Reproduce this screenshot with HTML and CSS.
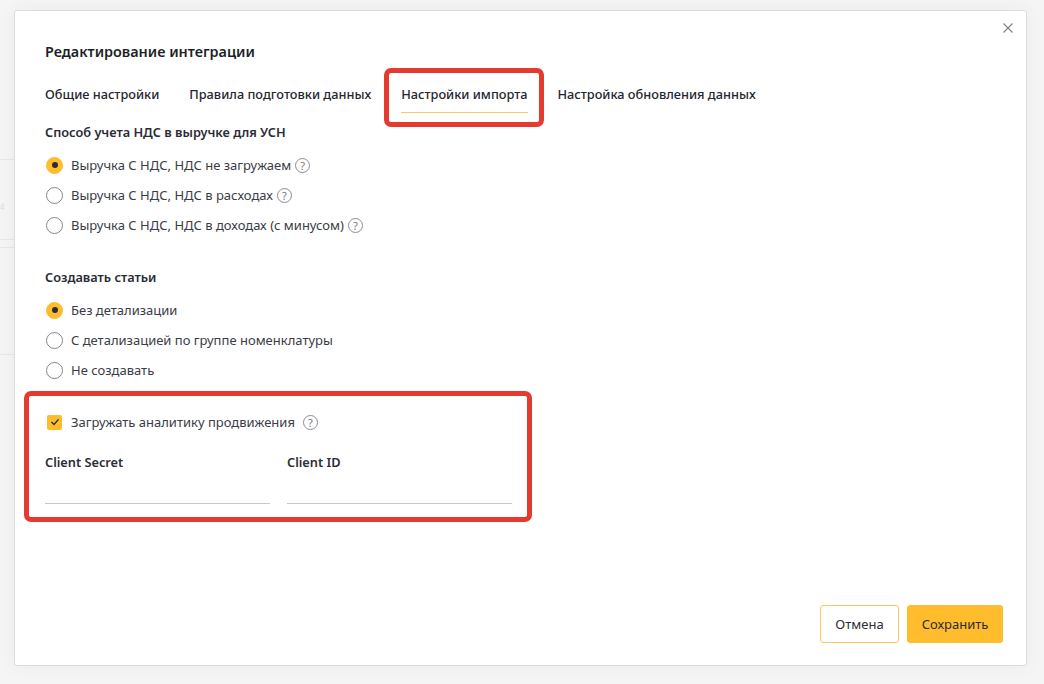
FILE: index.html
```html
<!DOCTYPE html>
<html lang="ru">
<head>
<meta charset="utf-8">
<title>Редактирование интеграции</title>
<link rel="stylesheet" href="styles.css">
</head>
<body>
<div class="backdrop">
  <span class="bg-line bg-line-1"></span>
  <span class="bg-line bg-line-2"></span>
  <span class="bg-line bg-line-3"></span>
  <span class="bg-line bg-line-4"></span>
  <span class="bg-digit">4</span>
</div>
<main class="modal">
  <svg class="close" width="12" height="12" viewBox="0 0 12 12"><path d="M1.5 1.5l9 9M10.5 1.5l-9 9" stroke="#85858f" stroke-width="1.2" fill="none"/></svg>
  <h1 class="title">Редактирование интеграции</h1>
  <nav class="tabs">
    <a class="tab">Общие настройки</a>
    <a class="tab">Правила подготовки данных</a>
    <a class="tab tab-active">Настройки импорта</a>
    <a class="tab">Настройка обновления данных</a>
  </nav>
  <section class="group group-vat">
    <h2 class="group-title">Способ учета НДС в выручке для УСН</h2>
    <div class="radio-list">
      <label class="option"><span class="radio radio-on"></span><span>Выручка С НДС, НДС не загружаем</span><span class="help">?</span></label>
      <label class="option"><span class="radio"></span><span>Выручка С НДС, НДС в расходах</span><span class="help">?</span></label>
      <label class="option"><span class="radio"></span><span>Выручка С НДС, НДС в доходах (с минусом)</span><span class="help">?</span></label>
    </div>
  </section>
  <section class="group group-items">
    <h2 class="group-title">Создавать статьи</h2>
    <div class="radio-list">
      <label class="option"><span class="radio radio-on"></span><span>Без детализации</span></label>
      <label class="option"><span class="radio"></span><span>С детализацией по группе номенклатуры</span></label>
      <label class="option"><span class="radio"></span><span>Не создавать</span></label>
    </div>
  </section>
  <section class="analytics">
    <label class="option option-check"><span class="check"><svg width="10" height="8" viewBox="0 0 10 8"><path d="M1.5 4l2.5 2.4 4.5-5" stroke="#2a2c36" stroke-width="1.4" fill="none"/></svg></span><span>Загружать аналитику продвижения</span><span class="help help-wide">?</span></label>
    <div class="fields">
      <div class="field"><span class="field-label">Client Secret</span><span class="field-input"></span></div>
      <div class="field"><span class="field-label">Client ID</span><span class="field-input"></span></div>
    </div>
  </section>
  <footer class="actions">
    <button class="btn btn-outline">Отмена</button>
    <button class="btn btn-primary">Сохранить</button>
  </footer>
</main>
<div class="mark mark-tab"></div>
<div class="mark mark-block"></div>
</body>
</html>
```
FILE: styles.css
```css
* { box-sizing: border-box; }
html, body { margin: 0; height: 100%; }
body {
  width: 1044px;
  height: 684px;
  overflow: hidden;
  background: #f5f5f5;
  font-family: "Noto Sans", "Liberation Sans", sans-serif;
  font-size: 13px;
  color: #2a2c36;
  position: relative;
}
.backdrop { position: absolute; inset: 0; }
.bg-line { position: absolute; left: 0; width: 14px; height: 1px; background: #e8e8e8; }
.bg-line-1 { top: 159px; }
.bg-line-2 { top: 239px; }
.bg-line-3 { top: 247px; }
.bg-line-4 { top: 354px; }
.bg-digit { position: absolute; left: 0; top: 202px; font-size: 8px; line-height: 10px; color: #dcdce0; }
.modal {
  position: absolute;
  left: 14px;
  top: 10px;
  width: 1013px;
  height: 656px;
  background: #fff;
  border: 1px solid #dcdcdc;
  border-radius: 3px;
  box-shadow: 0 0 20px rgba(0, 0, 0, 0.05);
  padding: 33px 30px 0;
  display: flex;
  flex-direction: column;
}
.close { position: absolute; right: 12px; top: 11px; }
.title { margin: 0; font-size: 14.4px; line-height: 16px; font-weight: 600; color: #1d1f27; }
.tabs { display: flex; gap: 30px; margin-top: 25px; }
.tab { display: block; font-size: 12.75px; line-height: 18px; font-weight: 500; padding-bottom: 9px; border-bottom: 1px solid transparent; color: #24262f; }
.tab-active { border-bottom-color: #fbc866; }
.group-vat { margin-top: 11px; }
.group-items { margin-top: 35px; }
.group-title { margin: 0; font-size: 12.75px; line-height: 16px; font-weight: 600; }
.radio-list { display: flex; flex-direction: column; gap: 12px; margin-top: 16px; }
.option { display: flex; align-items: center; height: 18px; font-size: 13px; color: #3a3c46; }
.radio {
  width: 17px; height: 17px; margin: 0 8px 0 1px;
  border: 1px solid #85858f; border-radius: 50%; background: #fff;
  display: flex; align-items: center; justify-content: center; flex: none;
}
.radio-on { background: #ffbc2c; border-color: #ffbc2c; }
.radio-on::after { content: ""; width: 6px; height: 6px; border-radius: 50%; background: #2a2c36; }
.help {
  width: 15px; height: 15px; margin-left: 4px;
  border: 1px solid #8c8c94; border-radius: 50%;
  font-size: 11px; line-height: 13px; text-align: center; color: #77777f; flex: none;
}
.help-wide { margin-left: 8px; }
.analytics { margin-top: 34px; }
.check {
  width: 15px; height: 15px; margin: 0 9px 0 2px; flex: none;
  background: #ffbc2c; border-radius: 2px;
  display: flex; align-items: center; justify-content: center;
}
.fields { display: flex; gap: 17px; margin-top: 23px; }
.field { width: 225px; display: flex; flex-direction: column; }
.field-label { font-size: 12.75px; line-height: 16px; font-weight: 600; }
.field-input { height: 34px; border-bottom: 1px solid #c8c8cc; }
.actions { margin-top: auto; margin-bottom: 22px; margin-right: -7px; display: flex; justify-content: flex-end; gap: 8px; }
.btn { height: 38px; border-radius: 3px; font: inherit; font-size: 13px; color: #2a2c36; cursor: pointer; }
.btn-outline { width: 79px; background: #fff; border: 1px solid #fdc55e; }
.btn-primary { width: 96px; background: #ffbc2c; border: 1px solid #ffbc2c; }
.mark { position: absolute; border: 5px solid #e53a30; border-radius: 7px; pointer-events: none; }
.mark-tab { left: 384px; top: 68px; width: 160px; height: 59px; }
.mark-block { left: 24px; top: 391px; width: 508px; height: 131px; }
```
